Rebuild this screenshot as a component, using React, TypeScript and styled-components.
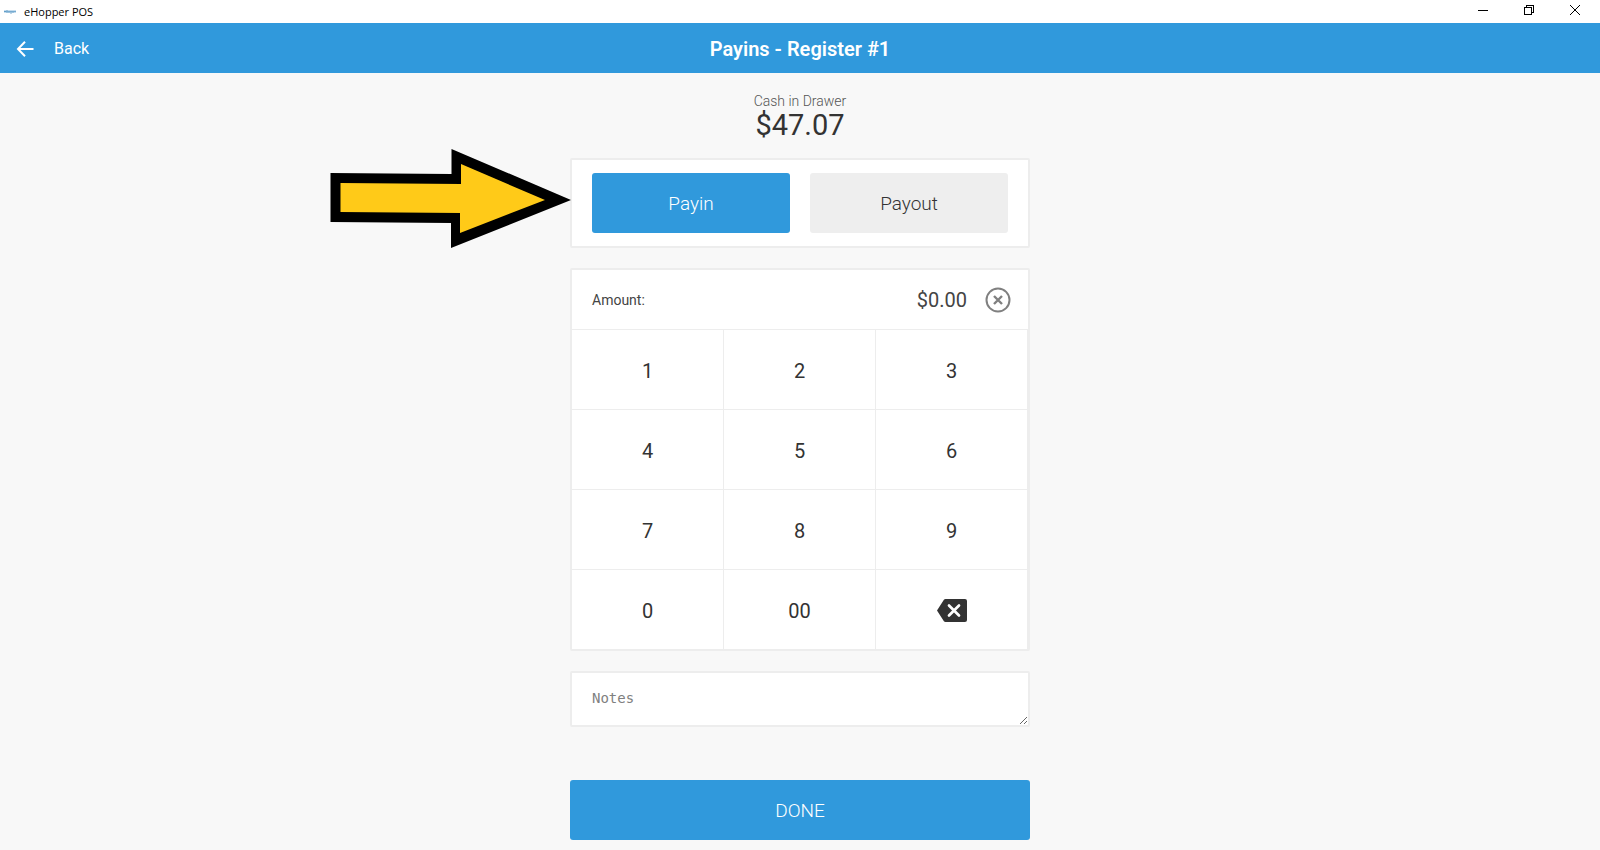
import React, { useState } from "react";
import styled, { createGlobalStyle } from "styled-components";

const BLUE = "#3099dc";
const LINE = "#ededed";
const INK = "#333333";

const GlobalStyle = createGlobalStyle`
  *, *::before, *::after { box-sizing: border-box; }
  body {
    margin: 0;
    background: #f8f8f8;
    color: ${INK};
    font-family: Roboto, "Liberation Sans", sans-serif;
  }
  button { font-family: inherit; cursor: pointer; }
`;

const TitleBar = styled.div`
  display: flex;
  justify-content: space-between;
  height: 23px;
  padding: 0 2px 0 4px;
  background: #ffffff;
`;

const AppName = styled.div`
  display: flex;
  align-items: center;
  gap: 8px;
  color: #000000;
  font-family: "Open Sans", "Noto Sans", sans-serif;
  font-size: 11px;
  line-height: 23px;
`;

const WindowControls = styled.div`
  display: flex;
`;

const WindowButton = styled.button`
  display: flex;
  align-items: center;
  justify-content: center;
  width: 46px;
  height: 20px;
  padding: 0;
  border: 0;
  background: transparent;
  color: #000000;
`;

const Header = styled.header`
  display: grid;
  grid-template-columns: 1fr auto 1fr;
  align-items: center;
  height: 50px;
  padding: 1px 16px 0;
  background: ${BLUE};
  color: #ffffff;
`;

const BackLink = styled.a`
  display: flex;
  align-items: center;
  justify-self: start;
  gap: 20px;
  color: inherit;
  font-size: 16px;
  line-height: 24px;
  text-decoration: none;
`;

const PageTitle = styled.h1`
  margin: 0;
  font-size: 20px;
  font-weight: 600;
  line-height: 24px;
`;

const Content = styled.main`
  display: flex;
  flex-direction: column;
  gap: 20px;
  max-width: 460px;
  margin: 0 auto;
  padding: 20px 0 10px;
`;

const Balance = styled.div`
  display: flex;
  flex-direction: column;
  align-items: center;
  height: 45px;
`;

const BalanceLabel = styled.span`
  color: #555555;
  font-size: 14px;
  font-weight: 300;
  line-height: 16px;
`;

const BalanceValue = styled.span`
  font-size: 29px;
  font-weight: 400;
  line-height: 32px;
`;

const Card = styled.section`
  border: 2px solid ${LINE};
  border-radius: 2px;
  background: #ffffff;
`;

const ModeCard = styled(Card)`
  position: relative;
  display: grid;
  grid-template-columns: 1fr 1fr;
  gap: 20px;
  padding: 13px 20px;
`;

const BigButton = styled.button<{ $primary?: boolean }>`
  height: 60px;
  padding: 1px 0 0;
  border: 0;
  border-radius: 3px;
  background: ${(p) => (p.$primary ? BLUE : "#eeeeee")};
  color: ${(p) => (p.$primary ? "#ffffff" : INK)};
  font-size: 19px;
  font-weight: 300;
  line-height: 24px;
`;

const DoneButton = styled(BigButton)`
  margin-top: 33px;
`;

const Pointer = styled.svg`
  position: absolute;
  top: -12px;
  left: -242px;
  pointer-events: none;
`;

const AmountRow = styled.div`
  display: flex;
  align-items: center;
  height: 60px;
  padding: 1px 17px 0 20px;
  border-bottom: 1px solid ${LINE};
`;

const AmountLabel = styled.span`
  flex: 1;
  color: #444444;
  font-size: 14px;
  line-height: 20px;
`;

const AmountValue = styled.output`
  color: #444444;
  font-size: 20px;
  line-height: 24px;
`;

const ClearButton = styled.button`
  display: flex;
  margin-left: 18px;
  padding: 0;
  border: 0;
  background: transparent;
  color: #808080;
`;

const Keypad = styled.div`
  display: grid;
  grid-template-columns: repeat(3, 1fr);
`;

const Key = styled.button`
  display: flex;
  align-items: center;
  justify-content: center;
  height: 80px;
  padding: 2px 0 0;
  border: solid ${LINE};
  border-width: 0 1px 1px 0;
  background: transparent;
  color: ${INK};
  font-size: 20px;
  line-height: 24px;

  &:nth-last-child(-n + 3) {
    height: 79px;
    border-bottom-width: 0;
  }
`;

const Notes = styled.textarea`
  display: block;
  width: 100%;
  height: 56px;
  padding: 15px 20px;
  border: 2px solid ${LINE};
  border-radius: 2px;
  background: #ffffff;
  color: ${INK};
  font-family: "DejaVu Sans Mono", "Liberation Mono", monospace;
  font-size: 14px;
  line-height: 20px;
  resize: vertical;

  &::placeholder { color: #808080; }
`;

const DIGITS = ["1", "2", "3", "4", "5", "6", "7", "8", "9", "0", "00"];

export default function App() {
  const [mode, setMode] = useState<"in" | "out">("in");
  const [cents, setCents] = useState("");
  const amount = (Number(cents || "0") / 100).toFixed(2);

  return (
    <>
      <GlobalStyle />
      <TitleBar>
        <AppName>
          <svg width="12" height="4" viewBox="0 0 12 4" aria-hidden="true">
            <path d="M0 1.500h12" fill="none" stroke="#8dbbdc" strokeWidth="2" />
            <path d="M0 1.500h2M3 0v3M5 1v2M7 1v3M9 1v2M11 1v1" fill="none" stroke="#4f90bd" opacity="0.7" />
          </svg>
          eHopper POS
        </AppName>
        <WindowControls>
          <WindowButton aria-label="Minimize">
            <svg width="10" height="10" viewBox="0 0 10 10" shapeRendering="crispEdges">
              <path d="M0 5.5h10" stroke="currentColor" />
            </svg>
          </WindowButton>
          <WindowButton aria-label="Restore">
            <svg width="10" height="10" viewBox="0 0 10 10" fill="none" stroke="currentColor" shapeRendering="crispEdges">
              <path d="M.5 2.5h7v7h-7zM2.5 2.5v-2h7v7h-2" />
            </svg>
          </WindowButton>
          <WindowButton aria-label="Close">
            <svg width="10" height="10" viewBox="0 0 10 10" stroke="currentColor">
              <path d="M0 0l10 10M10 0L0 10" />
            </svg>
          </WindowButton>
        </WindowControls>
      </TitleBar>

      <Header>
        <BackLink href="#back">
          <svg width="18" height="16" viewBox="0 0 18 16" fill="none" stroke="currentColor" strokeWidth="2" aria-hidden="true">
            <path d="M9 .8L2 8l7 7.2M2 8h15.500" />
          </svg>
          Back
        </BackLink>
        <PageTitle>Payins - Register #1</PageTitle>
      </Header>

      <Content>
        <Balance>
          <BalanceLabel>Cash in Drawer</BalanceLabel>
          <BalanceValue>$47.07</BalanceValue>
        </Balance>

        <ModeCard>
          <BigButton $primary={mode === "in"} onClick={() => setMode("in")}>Payin</BigButton>
          <BigButton $primary={mode === "out"} onClick={() => setMode("out")}>Payout</BigButton>
          <Pointer width="242" height="100" viewBox="0 0 242 100" aria-hidden="true">
            <path d="M.5 25l121 1V1l119.500 51-120 48V75L.5 74z" fill="#000000" />
            <path d="M10.500 35l120.500 1V16l84 36-85 33V65L10.500 64z" fill="#ffca18" />
          </Pointer>
        </ModeCard>

        <Card>
          <AmountRow>
            <AmountLabel id="amount-label">Amount:</AmountLabel>
            <AmountValue aria-labelledby="amount-label">${amount}</AmountValue>
            <ClearButton aria-label="Clear amount" onClick={() => setCents("")}>
              <svg width="26" height="26" viewBox="0 0 26 26" fill="none" stroke="currentColor" strokeWidth="2">
                <circle cx="13" cy="13" r="11.5" />
                <path d="M9 9l8 8M17 9l-8 8" strokeWidth="2.400" />
              </svg>
            </ClearButton>
          </AmountRow>
          <Keypad>
            {DIGITS.map((d) => (
              <Key key={d} onClick={() => setCents((c) => (c + d).slice(0, 9))}>{d}</Key>
            ))}
            <Key aria-label="Delete last digit" onClick={() => setCents((c) => c.slice(0, -1))}>
              <svg width="30" height="23" viewBox="0 0 30 23">
                <path d="M8.5 0H28a2 2 0 0 1 2 2v19a2 2 0 0 1-2 2H8.500a2 2 0 0 1-1.600-.8L0 11.500 6.900.8A2 2 0 0 1 8.500 0z" fill={INK} />
                <path d="M12 6.500l10 10M22 6.500l-10 10" stroke="#ffffff" strokeWidth="2.700" strokeLinecap="round" />
              </svg>
            </Key>
          </Keypad>
        </Card>

        <Notes placeholder="Notes" aria-label="Notes" />

        <DoneButton $primary>DONE</DoneButton>
      </Content>
    </>
  );
}
